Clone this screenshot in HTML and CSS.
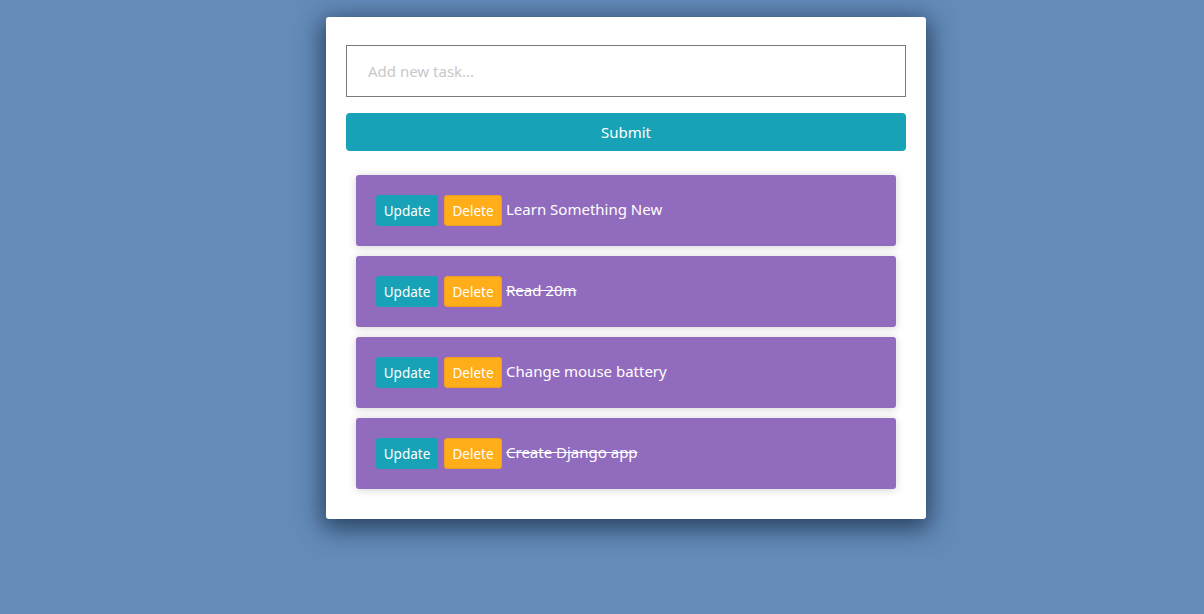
FILE: index.html
```html
<!DOCTYPE html>
<html>
<head>
<meta charset="utf-8">
<link rel="stylesheet" href="styles.css">
</head>
<body>
<div class="card">
  <form class="task-form">
    <input class="task-input" type="text" placeholder="Add new task...">
    <button class="submit" type="button">Submit</button>
  </form>
  <div class="tasks">
    <div class="task">
      <button class="btn btn-update">Update</button>
      <button class="btn btn-delete">Delete</button>
      <span class="title">Learn Something New</span>
    </div>
    <div class="task">
      <button class="btn btn-update">Update</button>
      <button class="btn btn-delete">Delete</button>
      <span class="title done">Read 20m</span>
    </div>
    <div class="task">
      <button class="btn btn-update">Update</button>
      <button class="btn btn-delete">Delete</button>
      <span class="title">Change mouse battery</span>
    </div>
    <div class="task">
      <button class="btn btn-update">Update</button>
      <button class="btn btn-delete">Delete</button>
      <span class="title done">Create Django app</span>
    </div>
  </div>
</div>
</body>
</html>
```

FILE: styles.css
```css
html, body {
  margin: 0;
  padding: 0;
}
body {
  background: #648cb9;
  font-family: "Noto Sans", "Open Sans", sans-serif;
  min-height: 614px;
  padding: 17px 0 0 48px;
  box-sizing: border-box;
}
.card {
  width: 600px;
  margin: 0 auto;
  background: #fff;
  border-radius: 3px;
  box-shadow: 0 6px 24px 4px rgba(20, 40, 70, 0.75);
  padding: 28px 20px 30px;
  box-sizing: border-box;
}
.task-form {
  display: flex;
  flex-direction: column;
  gap: 16px;
}
.task-input {
  height: 52px;
  box-sizing: border-box;
  border: 1px solid #7a7a7a;
  border-radius: 0;
  padding: 0 21px;
  font-family: inherit;
  font-size: 15px;
  color: #333;
  outline: none;
}
.task-input::placeholder {
  color: #c8c8c8;
}
.submit {
  height: 38px;
  border: none;
  border-radius: 4px;
  background: #17a2b8;
  color: #fff;
  font-family: inherit;
  font-size: 15px;
}
.tasks {
  margin-top: 24px;
  padding: 0 10px;
  display: flex;
  flex-direction: column;
  gap: 10px;
}
.task {
  background: #916bbd;
  border-radius: 3px;
  padding: 20px;
  height: 71px;
  box-sizing: border-box;
  display: flex;
  align-items: center;
  box-shadow: 0 1px 8px rgba(0, 0, 0, 0.18);
}
.btn {
  height: 31px;
  border: 1px solid transparent;
  border-radius: 3px;
  color: #fff;
  font-family: inherit;
  font-size: 13.5px;
  padding: 1px 0 0;
  margin-right: 4px;
}
.btn-update {
  background: #17a2b8;
  width: 62px;
  margin-right: 6px;
}
.btn-delete {
  background: #ffad19;
  border-color: #f0a020;
  width: 58px;
}
.title {
  color: #fff;
  font-size: 15px;
  margin-top: -4px;
}
.done {
  text-decoration: line-through;
}
```
